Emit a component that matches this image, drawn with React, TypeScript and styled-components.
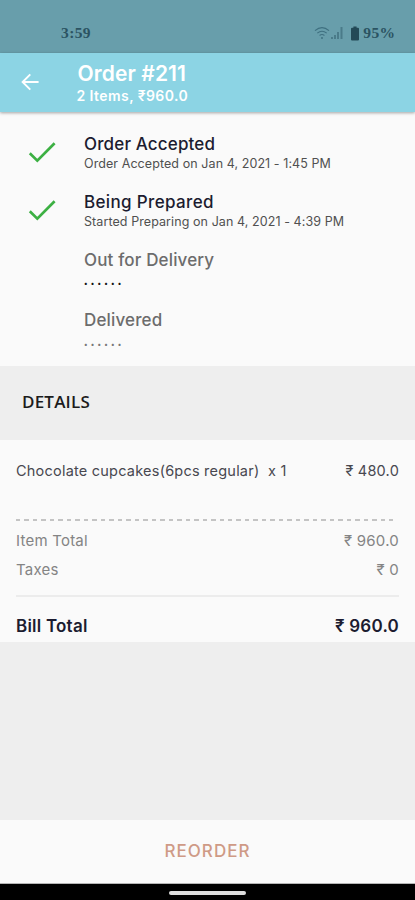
import React from 'react';
import styled, { createGlobalStyle } from 'styled-components';

const GlobalStyle = createGlobalStyle`
  * { box-sizing: border-box; }
  body { margin: 0; background: #eee; }
`;

const Screen = styled.div`
  display: flex;
  flex-direction: column;
  height: 900px;
  width: 100%;
  overflow: hidden;
  background: #eeeeee;
  font-family: Inter, 'Noto Sans', sans-serif;
  white-space: pre;
`;

const StatusBar = styled.div`
  flex: none;
  display: flex;
  align-items: flex-start;
  justify-content: space-between;
  height: 52.5px;
  padding: 23px 19.5px 0 61px;
  background: #689eab;
  color: #2b5362;
  font: bold 15.5px/20px 'Liberation Serif', serif;
  letter-spacing: 0.4px;
`;

const StatusIcons = styled.div`
  display: flex;
  align-items: center;
  svg { display: block; flex: none; }
`;

const Battery = styled.svg`
  margin: 0 4px 0 7px;
`;

const AppBar = styled.header`
  flex: none;
  display: flex;
  height: 59.5px;
  padding-left: 20px;
  background: #8cd4e4;
  color: #fff;
  box-shadow: 0 1px 3px rgba(0, 0, 0, 0.35);
  z-index: 1;
`;

const BackButton = styled.button`
  display: flex;
  width: 20px;
  height: 20px;
  margin: 19.5px 37.5px 0 0;
  padding: 0;
  border: 0;
  background: none;
  color: inherit;
`;

const Title = styled.h1`
  margin: 9.5px 0 0;
  font-size: 21px;
  font-weight: 600;
  line-height: 24px;
  letter-spacing: 0.1px;
`;

const Subtitle = styled.div`
  margin-left: -1px;
  font-size: 14px;
  font-weight: 600;
  line-height: 20px;
  letter-spacing: 0.42px;
`;

const Timeline = styled.section`
  flex: none;
  height: 254px;
  padding: 21.5px 0 0 28px;
  background: #fafafa;
`;

const Step = styled.div<{ $height: number }>`
  display: flex;
  height: ${(p) => p.$height}px;
`;

const StepMark = styled.div`
  width: 56px;
  padding-top: 7px;
  svg { display: block; }
`;

const StepName = styled.div<{ $done?: boolean; $spacing: number }>`
  font-size: 17px;
  font-weight: 500;
  line-height: 20px;
  letter-spacing: ${(p) => p.$spacing}px;
  color: ${(p) => (p.$done ? '#1c1c30' : '#6c6c6c')};
`;

const StepTime = styled.div`
  font-size: 12.5px;
  line-height: 19px;
  letter-spacing: 0.08px;
  color: #505050;
`;

const Pending = styled.div<{ $dark?: boolean }>`
  margin: 0.5px 0 0 -0.5px;
  font-size: 15px;
  font-weight: 500;
  line-height: 20px;
  letter-spacing: 2.2px;
  color: ${(p) => (p.$dark ? '#111' : '#777')};
`;

const SectionTitle = styled.h2`
  flex: none;
  display: flex;
  align-items: center;
  height: 74px;
  margin: 0;
  padding: 0 0 3px 22px;
  font: 600 17px/24px 'Open Sans', sans-serif;
  letter-spacing: 0.2px;
  color: #1c1c1c;
`;

const Bill = styled.section`
  flex: none;
  height: 202px;
  padding: 16px 16px 0;
  background: #fafafa;
`;

const Line = styled.div<{ $kind: 'item' | 'sum' | 'total' }>`
  display: flex;
  justify-content: space-between;
  height: ${(p) => (p.$kind === 'sum' ? 28.5 : 30)}px;
  line-height: 30px;
  font-size: ${(p) => (p.$kind === 'total' ? 17 : p.$kind === 'sum' ? 15 : 14.5)}px;
  font-weight: ${(p) => (p.$kind === 'total' ? 600 : 400)};
  color: ${(p) => (p.$kind === 'total' ? '#1c1c30' : p.$kind === 'sum' ? '#848484' : '#484850')};
  letter-spacing: 0.22px;
`;

const Dashes = styled.div`
  height: 2px;
  margin: 33px 6px 5px 0;
  background: repeating-linear-gradient(90deg, #c4c4c4 0 4.5px, transparent 4.5px 8.48px);
`;

const Rule = styled.div`
  height: 2px;
  margin: 12px 0 13.5px;
  background: #ececec;
`;

const Filler = styled.div`
  flex: 1;
`;

const Reorder = styled.button`
  flex: none;
  height: 64px;
  padding: 0 0 2px;
  border: 0;
  border-bottom: 1px solid #b5b5b5;
  background: #fafafa;
  color: #cf9a86;
  font: 500 17px/24px Inter, sans-serif;
  letter-spacing: 1px;
`;

const NavBar = styled.div`
  flex: none;
  display: flex;
  justify-content: center;
  height: 16px;
  padding-top: 7px;
  background: #000;
`;

const Handle = styled.div`
  width: 77px;
  height: 3.5px;
  border-radius: 2px;
  background: #dedede;
`;

const Check = () => (
  <svg width="28" height="24" viewBox="0 0 28 24" fill="none" stroke="#3cb043" strokeWidth="2.7">
    <path d="M1.8 12.2 9.3 19.6 26.6 2.3" />
  </svg>
);

export default function App() {
  return (
    <Screen>
      <GlobalStyle />
      <StatusBar>
        <span>3:59</span>
        <StatusIcons>
          <svg width="16" height="14" viewBox="0 0 16 14" fill="none" stroke="#3f7080" strokeWidth="1.2">
            <path d="M1 4.6Q8-1.2 15 4.6M3.3 7.1Q8 3.4 12.7 7.1M5.6 9.4Q8 7.6 10.4 9.4" />
            <circle cx="8" cy="12" r="1" fill="#3f7080" stroke="none" />
          </svg>
          <svg width="14" height="14" viewBox="0 0 14 14" fill="#4a7b89">
            <path d="M1 13v-2h2v2zM4 13V9h2v4zM7 13V6h2v7zM10.5 13V1h2v12z" />
          </svg>
          <Battery width="8" height="15" viewBox="0 0 8 15" fill="#234957">
            <path d="M2.4 0.5h3.2v1.2H7q1 0 1 1V13.5q0 1-1 1H1q-1 0-1-1V2.7q0-1 1-1h1.4z" />
          </Battery>
          <span>95%</span>
        </StatusIcons>
      </StatusBar>
      <AppBar>
        <BackButton aria-label="Back">
          <svg width="20" height="20" viewBox="0 0 20 20" fill="none" stroke="currentColor" strokeWidth="1.9">
            <path d="M18.6 10H3M10.3 2.3 2.6 10l7.7 7.7" />
          </svg>
        </BackButton>
        <div>
          <Title>Order #211</Title>
          <Subtitle>2 Items, ₹960.0</Subtitle>
        </div>
      </AppBar>
      <Timeline>
        <Step $height={58}>
          <StepMark><Check /></StepMark>
          <div>
            <StepName $done $spacing={0.15}>Order Accepted</StepName>
            <StepTime>Order Accepted on Jan 4, 2021 - 1:45 PM</StepTime>
          </div>
        </Step>
        <Step $height={58}>
          <StepMark><Check /></StepMark>
          <div>
            <StepName $done $spacing={0.35}>Being Prepared</StepName>
            <StepTime>Started Preparing on Jan 4, 2021 - 4:39 PM</StepTime>
          </div>
        </Step>
        <Step $height={60.5}>
          <StepMark />
          <div>
            <StepName $spacing={0.15}>Out for Delivery</StepName>
            <Pending $dark>......</Pending>
          </div>
        </Step>
        <Step $height={50}>
          <StepMark />
          <div>
            <StepName $spacing={0.15}>Delivered</StepName>
            <Pending>......</Pending>
          </div>
        </Step>
      </Timeline>
      <SectionTitle>DETAILS</SectionTitle>
      <Bill>
        <Line $kind="item">
          <span>Chocolate cupcakes(6pcs regular)  x 1</span>
          <span>₹ 480.0</span>
        </Line>
        <Dashes />
        <Line $kind="sum">
          <span>Item Total</span>
          <span>₹ 960.0</span>
        </Line>
        <Line $kind="sum">
          <span>Taxes</span>
          <span>₹ 0</span>
        </Line>
        <Rule />
        <Line $kind="total">
          <span>Bill Total</span>
          <span>₹ 960.0</span>
        </Line>
      </Bill>
      <Filler />
      <Reorder>REORDER</Reorder>
      <NavBar><Handle /></NavBar>
    </Screen>
  );
}
